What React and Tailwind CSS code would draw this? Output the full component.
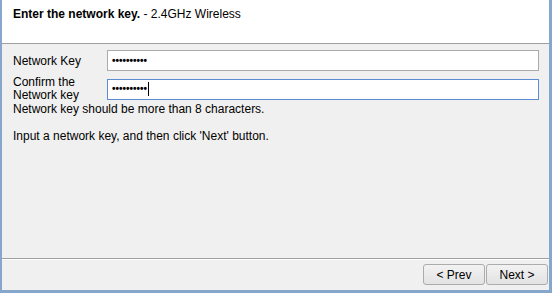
import React from 'react';

const font = { fontFamily: '"Liberation Sans", Arial, sans-serif' };

const KeyField = ({ focused, dots }) => (
  <div
    className={`flex items-center h-[21px] flex-1 bg-white pl-[4px] border ${
      focused ? 'border-[#5b8ed1]' : 'border-[#ababab]'
    }`}
  >
    <span className="text-[10px] leading-none text-black font-bold">{dots}</span>
    {focused && <span className="w-px h-[14px] bg-black ml-[1px]" />}
  </div>
);

const WizardButton = ({ children }) => (
  <button className="w-[62px] h-[21px] border border-[#acacac] rounded-[3px] bg-gradient-to-b from-[#f2f2f2] to-[#e3e3e3] text-[12px] text-black leading-none">
    {children}
  </button>
);

export default function App() {
  return (
    <div
      style={font}
      className="w-[552px] h-[293px] flex flex-col bg-[#f0f0f0] border-l-2 border-r-[3px] border-b-[3px] border-[#86a6cc] text-[12px] text-black"
    >
      <div className="h-[44px] shrink-0 bg-white border-b border-[#a0a0a0] pl-[11px] pt-[5px]">
        <span className="font-bold">Enter the network key.</span>
        <span> - 2.4GHz Wireless</span>
      </div>

      <div className="flex-1 flex flex-col px-[11px] pt-[6px] pr-[10px]">
        <div className="flex items-center">
          <span className="w-[94px] shrink-0">Network Key</span>
          <KeyField dots="••••••••••" />
        </div>
        <div className="flex items-center mt-[5px]">
          <span className="w-[94px] shrink-0 leading-[13px]">
            Confirm the
            <br />
            Network key
          </span>
          <KeyField focused dots="••••••••••" />
        </div>
        <div className="leading-[14px]">Network key should be more than 8 characters.</div>
        <div className="leading-[14px] mt-[13px]">Input a network key, and then click 'Next' button.</div>
      </div>

      <div className="shrink-0 border-t border-[#a0a0a0]">
        <div className="border-t border-white flex justify-end items-center gap-px pt-[4px] pb-[5px] pr-px">
          <WizardButton>&lt; Prev</WizardButton>
          <WizardButton>Next &gt;</WizardButton>
        </div>
      </div>
    </div>
  );
}
